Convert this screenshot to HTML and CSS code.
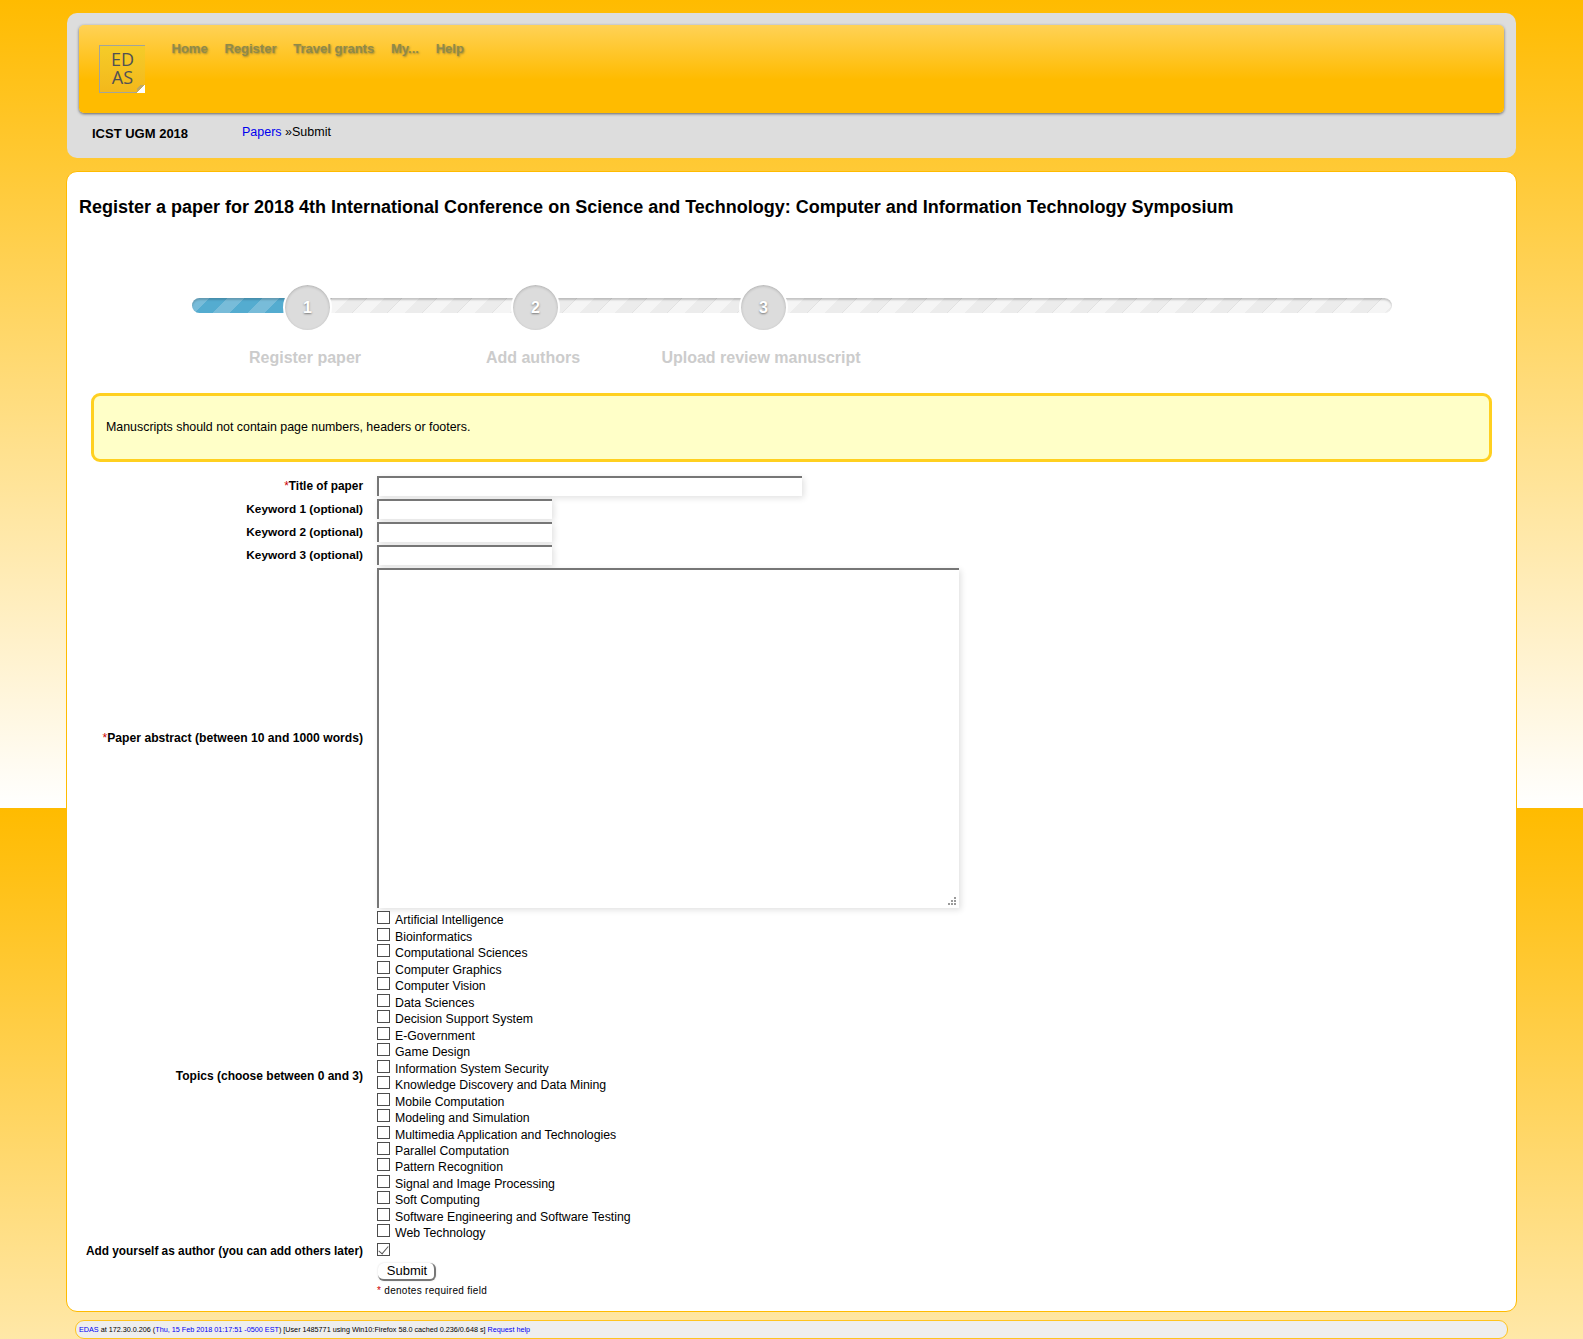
FILE: index.html
```html
<!DOCTYPE html>
<html lang="en">
<head>
<meta charset="utf-8">
<title>Register a paper</title>
<link rel="stylesheet" href="styles.css">
</head>
<body>
<div class="page">
  <header class="top-panel">
    <div class="banner">
      <div class="logo"><span>ED</span><span>AS</span></div>
      <nav class="nav">
        <a href="#">Home</a>
        <a href="#">Register</a>
        <a href="#">Travel grants</a>
        <a href="#">My...</a>
        <a href="#">Help</a>
      </nav>
    </div>
    <div class="subbar">
      <span class="conf">ICST UGM 2018</span>
      <span class="crumbs"><a href="#">Papers</a> »Submit</span>
    </div>
  </header>

  <main class="card">
    <h1>Register a paper for 2018 4th International Conference on Science and Technology: Computer and Information Technology Symposium</h1>

    <div class="steps">
      <div class="track">
        <div class="fill"></div>
        <div class="dot dot-1">1</div>
        <div class="dot dot-2">2</div>
        <div class="dot dot-3">3</div>
      </div>
      <div class="step-labels">
        <span>Register paper</span>
        <span>Add authors</span>
        <span>Upload review manuscript</span>
      </div>
    </div>

    <div class="notice">Manuscripts should not contain page numbers, headers or footers.</div>

    <form class="form">
      <label class="lbl"><span class="req">*</span>Title of paper</label>
      <input class="field field-title" type="text">
      <label class="lbl lbl-key">Keyword 1 (optional)</label>
      <input class="field field-key" type="text">
      <label class="lbl lbl-key">Keyword 2 (optional)</label>
      <input class="field field-key" type="text">
      <label class="lbl lbl-key">Keyword 3 (optional)</label>
      <input class="field field-key" type="text">
      <label class="lbl lbl-abstract"><span class="req">*</span>Paper abstract (between 10 and 1000 words)</label>
      <div class="area-wrap">
        <textarea class="field area"></textarea>
        <svg class="grip" width="8" height="8" viewBox="0 0 8 8"><path fill="#9a9a9a" d="M6 0h2v2H6zM3 3h2v2H3zM6 3h2v2H6zM0 6h2v2H0zM3 6h2v2H3zM6 6h2v2H6z"/></svg>
      </div>
      <label class="lbl lbl-topics">Topics (choose between 0 and 3)</label>
      <div class="topics">
        <label class="topic"><input type="checkbox"><span>Artificial Intelligence</span></label>
        <label class="topic"><input type="checkbox"><span>Bioinformatics</span></label>
        <label class="topic"><input type="checkbox"><span>Computational Sciences</span></label>
        <label class="topic"><input type="checkbox"><span>Computer Graphics</span></label>
        <label class="topic"><input type="checkbox"><span>Computer Vision</span></label>
        <label class="topic"><input type="checkbox"><span>Data Sciences</span></label>
        <label class="topic"><input type="checkbox"><span>Decision Support System</span></label>
        <label class="topic"><input type="checkbox"><span>E-Government</span></label>
        <label class="topic"><input type="checkbox"><span>Game Design</span></label>
        <label class="topic"><input type="checkbox"><span>Information System Security</span></label>
        <label class="topic"><input type="checkbox"><span>Knowledge Discovery and Data Mining</span></label>
        <label class="topic"><input type="checkbox"><span>Mobile Computation</span></label>
        <label class="topic"><input type="checkbox"><span>Modeling and Simulation</span></label>
        <label class="topic"><input type="checkbox"><span>Multimedia Application and Technologies</span></label>
        <label class="topic"><input type="checkbox"><span>Parallel Computation</span></label>
        <label class="topic"><input type="checkbox"><span>Pattern Recognition</span></label>
        <label class="topic"><input type="checkbox"><span>Signal and Image Processing</span></label>
        <label class="topic"><input type="checkbox"><span>Soft Computing</span></label>
        <label class="topic"><input type="checkbox"><span>Software Engineering and Software Testing</span></label>
        <label class="topic"><input type="checkbox"><span>Web Technology</span></label>
      </div>
      <label class="lbl">Add yourself as author (you can add others later)</label>
      <div class="self"><input type="checkbox" checked></div>
      <div class="actions">
        <button class="submit" type="button">Submit</button>
        <p class="note"><span class="req">*</span> denotes required field</p>
      </div>
    </form>
  </main>

  <footer class="foot"><a href="#">EDAS</a> at 172.30.0.206 (<a href="#">Thu, 15 Feb 2018 01:17:51 -0500 EST</a>) [User 1485771 using Win10:Firefox 58.0 cached 0.236/0.648 s] <a href="#">Request help</a></footer>
</div>
</body>
</html>
```
FILE: styles.css
```css
* { box-sizing: border-box; }
html, body { margin: 0; padding: 0; }
body {
  font-family: "Liberation Sans", Arial, sans-serif;
  font-size: 12px;
  color: #000;
  background: linear-gradient(to bottom, #ffbb00 0, #ffffff 808px) repeat 0 0 / 100% 808px;
}
a { color: #0000ee; text-decoration: none; }
.page { padding: 13px 67px 0; }

.top-panel {
  height: 145px;
  padding: 12px;
  background: #dddddd;
  border-radius: 10px;
}
.banner {
  display: flex;
  align-items: flex-start;
  height: 88px;
  padding: 20px 0 0 20px;
  background: linear-gradient(to bottom, #ffd256 0, #ffbb00 62%);
  border-radius: 5px;
  box-shadow: 0 1px 3px rgba(0,0,0,.55);
}
.logo {
  position: relative;
  display: flex;
  flex-direction: column;
  align-items: center;
  width: 46px;
  height: 48px;
  padding-top: 4px;
  font-family: "Open Sans", sans-serif;
  font-size: 18px;
  line-height: 18px;
  color: #505055;
  background: linear-gradient(to bottom, #f5cc29, #f3b81b);
  border-top: 1px solid #a3a59a;
  border-left: 1px solid #a3a59a;
  border-bottom: 1px solid #a3a59a;
}
.logo::after {
  content: "";
  position: absolute;
  right: 0;
  bottom: -1px;
  width: 8px;
  height: 8px;
  background: linear-gradient(to bottom right, transparent 25%, #c0a860 25%, #c0a860 50%, #fff 50%);
}
.nav { display: flex; gap: 16.8px; margin: -4px 0 0 26.5px; }
.nav a {
  font-size: 13px;
  font-weight: bold;
  line-height: 16px;
  color: #8f8a4a;
  text-shadow: 1px 1px 2px rgba(80,80,60,.55);
}
.subbar { display: flex; height: 33px; padding-left: 13px; }
.conf { width: 150px; margin-top: 13px; font-size: 13px; font-weight: bold; line-height: 16px; }
.crumbs { margin-top: 12px; font-size: 12.5px; line-height: 15px; }

.card {
  margin: 13px -1px 0;
  height: 1141px;
  padding: 23px 12px 0;
  background: #fff;
  border: 1px solid #ffbb00;
  border-radius: 11px;
}
h1 { margin: 0; font-size: 18px; font-weight: bold; line-height: 24px; }

.steps { width: 1200px; margin: 79px 0 0 113px; }
.track {
  position: relative;
  height: 15px;
  border-radius: 8px;
  background-color: #ececec;
  background-image: linear-gradient(135deg, #f5f5f5 25%, #ececec 25%, #ececec 49%, #e2e2e2 49%, #e2e2e2 50%, #f5f5f5 50%, #f5f5f5 75%, #ececec 75%, #ececec 99%, #e2e2e2 99%);
  background-size: 35px 35px;
  box-shadow: inset 0 2px 2px rgba(0,0,0,.2);
}
.fill {
  width: 96px;
  height: 15px;
  border-radius: 8px 0 0 8px;
  background-color: #54acd0;
  background-image: linear-gradient(135deg, #78bcd9 25%, transparent 25%, transparent 50%, #78bcd9 50%, #78bcd9 75%, transparent 75%);
  background-size: 35px 35px;
  box-shadow: inset 0 2px 2px rgba(0,0,0,.18);
}
.dot {
  position: absolute;
  top: -15px;
  width: 49px;
  height: 49px;
  border: 2px solid #fff;
  border-radius: 50%;
  background: #dcdcdc;
  box-shadow: inset 0 1px 3px rgba(0,0,0,.2);
  color: #fff;
  font-size: 16px;
  font-weight: bold;
  line-height: 45px;
  text-align: center;
  text-shadow: 0 1px 2px rgba(0,0,0,.45);
}
.dot-1 { left: 91px; }
.dot-2 { left: 319px; }
.dot-3 { left: 547px; }
.step-labels { display: grid; grid-template-columns: repeat(3, 228px); margin: 35px 0 0 -1px; }
.step-labels span {
  font-size: 16px;
  font-weight: bold;
  line-height: 20px;
  text-align: center;
  color: #cccccc;
}

.notice {
  display: flex;
  align-items: center;
  height: 69px;
  margin: 25px 12px 0 12px;
  padding: 0 0 2px 12px;
  font-size: 12.4px;
  background: #ffffc8;
  border: 3px solid #ffd020;
  border-radius: 9px;
}

.form {
  display: grid;
  grid-template-columns: 284px 1fr;
  column-gap: 14px;
  row-gap: 3px;
  align-items: center;
  margin-top: 14px;
}
.lbl { font-size: 11.85px; font-weight: bold; line-height: 14px; text-align: right; }
.lbl-key { font-size: 11.8px; }
.lbl-abstract { font-size: 12.15px; }
.lbl-topics { margin-top: 2px; font-size: 12px; }
.req { color: #c00; font-weight: normal; }
.field {
  display: block;
  padding: 0;
  background: #fff;
  border-style: solid;
  border-color: #767676;
  border-width: 2px 0 0 2px;
  border-radius: 0;
  box-shadow: 2px 2px 6px rgba(0,0,0,.12);
  outline: none;
}
.field-title { width: 425px; height: 20px; }
.field-key { width: 175px; height: 20px; }
.area-wrap { position: relative; width: 582px; height: 340px; }
.area { width: 582px; height: 340px; resize: none; }
.grip { position: absolute; right: 3px; bottom: 3px; }

.topics { display: flex; flex-direction: column; margin-top: -0.6px; }
.topic { display: flex; align-items: flex-start; height: 16.47px; font-size: 12.3px; line-height: 14px; }
.topic span { margin-left: 5px; padding-top: 3px; }
input[type="checkbox"] {
  appearance: none;
  position: relative;
  flex: none;
  display: block;
  width: 13px;
  height: 13px;
  margin: 1px 0 0;
  background: #fff;
  border: 1px solid #4d4d4d;
}
input[type="checkbox"]:checked::after {
  content: "";
  position: absolute;
  left: 3px;
  top: 0;
  width: 4px;
  height: 9px;
  border: solid #555;
  border-width: 0 1px 1px 0;
  transform: rotate(40deg);
}
.self { height: 16.6px; }
.self input[type="checkbox"] { margin-top: 0; }
.actions { grid-column: 2; margin-top: 1px; }
.submit {
  display: block;
  width: 58px;
  height: 18px;
  margin-left: 1px;
  padding: 0 0 0 2px;
  font-family: "Liberation Sans", Arial, sans-serif;
  font-size: 13px;
  line-height: 14px;
  color: #000;
  background: #fff;
  border: solid #777;
  border-width: 0 2px 2px 0;
  border-radius: 6px;
  box-shadow: 0 0 2px rgba(0,0,0,.15);
}
.note { margin: 3px 0 0; font-size: 10px; letter-spacing: .3px; line-height: 14px; }

.foot {
  height: 19px;
  margin: 8px 8px 0;
  padding-left: 3px;
  font-size: 7.23px;
  line-height: 17px;
  background: #eeeeee;
  border: 1px solid #ffc41f;
  border-radius: 9px;
}
```
